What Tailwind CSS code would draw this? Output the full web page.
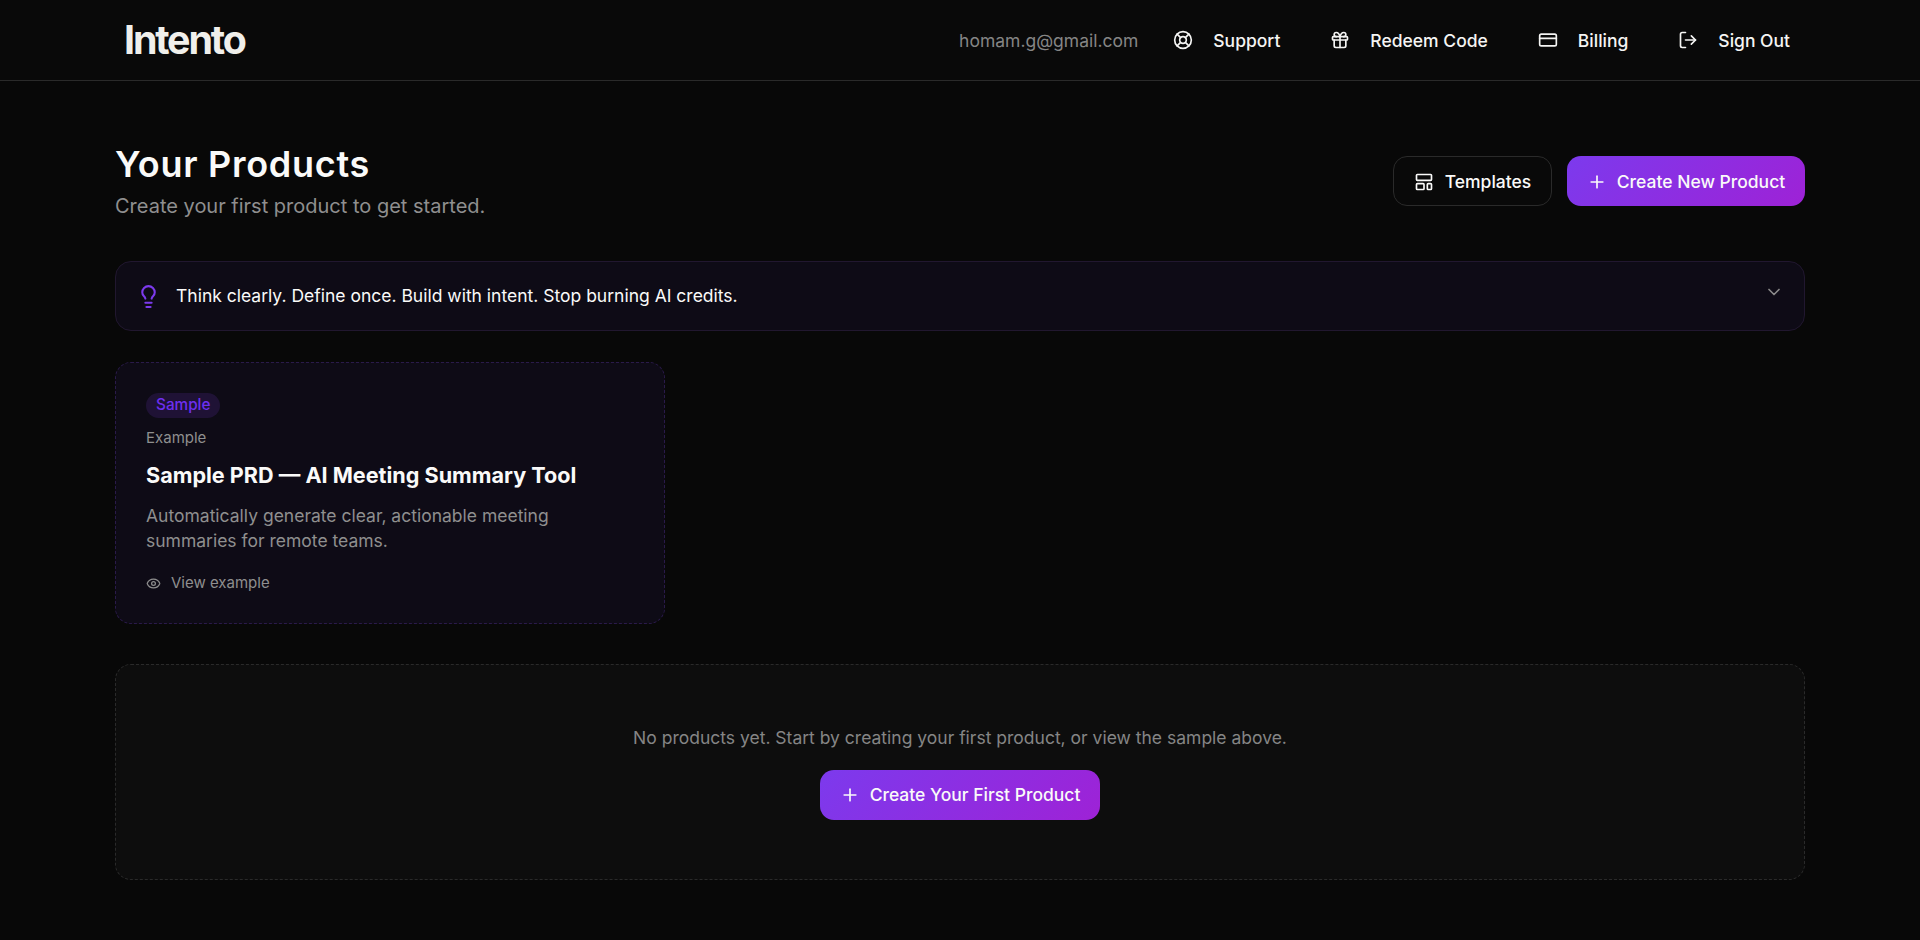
<!DOCTYPE html>
<html lang="en">
<head>
    <meta charset="UTF-8">
    <title>Intento - Your Products</title>
    <script src="https://cdn.jsdelivr.net/npm/@tailwindcss/browser@4"></script>
</head>
<body class="bg-[#080808] font-['Inter',sans-serif] text-white">
    <div class="min-h-[940px]">
        <!-- Top bar -->
        <header class="h-[81px] border-b border-[#2a2a2a] bg-[#090909] px-[115px] flex items-center justify-between">
            <span class="ml-[9px] text-[39.4px] leading-[40px] font-bold tracking-[-0.055em] text-[#f0efeb]">Intento</span>
            <nav class="-mr-px flex items-center gap-[18px] text-[17.5px] font-medium text-[#f5f5f4]">
                <span class="mr-px pt-[2px] font-normal text-[#858585]">homam.g@gmail.com</span>
                <a class="flex items-center gap-5 px-4 py-2">
                    <svg class="w-5 h-5" viewBox="0 0 24 24" fill="none" stroke="currentColor" stroke-width="2" stroke-linecap="round" stroke-linejoin="round"><circle cx="12" cy="12" r="10"/><path d="m4.93 4.93 4.24 4.24"/><path d="m14.83 9.17 4.24-4.24"/><path d="m14.83 14.83 4.24 4.24"/><path d="m9.17 14.83-4.24 4.24"/><circle cx="12" cy="12" r="4"/></svg>
                    <span class="pt-[2px]">Support</span>
                </a>
                <a class="flex items-center gap-5 px-4 py-2">
                    <svg class="w-5 h-5" viewBox="0 0 24 24" fill="none" stroke="currentColor" stroke-width="2" stroke-linecap="round" stroke-linejoin="round"><rect x="3" y="8" width="18" height="4" rx="1"/><path d="M12 8v13"/><path d="M19 12v7a2 2 0 0 1-2 2H7a2 2 0 0 1-2-2v-7"/><path d="M7.5 8a2.5 2.5 0 0 1 0-5A4.8 8 0 0 1 12 8a4.8 8 0 0 1 4.5-5 2.5 2.5 0 0 1 0 5"/></svg>
                    <span class="pt-[2px]">Redeem Code</span>
                </a>
                <a class="flex items-center gap-5 px-4 py-2">
                    <svg class="w-5 h-5" viewBox="0 0 24 24" fill="none" stroke="currentColor" stroke-width="2" stroke-linecap="round" stroke-linejoin="round"><rect x="2" y="5" width="20" height="14" rx="2"/><line x1="2" y1="10" x2="22" y2="10"/></svg>
                    <span class="pt-[2px]">Billing</span>
                </a>
                <a class="flex items-center gap-5 px-4 py-2">
                    <svg class="w-5 h-5" viewBox="0 0 24 24" fill="none" stroke="currentColor" stroke-width="2" stroke-linecap="round" stroke-linejoin="round"><path d="M9 21H5a2 2 0 0 1-2-2V5a2 2 0 0 1 2-2h4"/><polyline points="16 17 21 12 16 7"/><line x1="21" y1="12" x2="9" y2="12"/></svg>
                    <span class="pt-[2px]">Sign Out</span>
                </a>
            </nav>
        </header>

        <main class="px-[115px] pt-[63px]">
            <!-- Page heading -->
            <div class="flex items-center justify-between mb-[41px]">
                <div>
                    <h1 class="text-[36px] leading-[40px] font-semibold tracking-[0.02em] text-[#fafaf9]">Your Products</h1>
                    <p class="mt-2 text-[20px] leading-[28px] text-[#8f8f8f]">Create your first product to get started.</p>
                </div>
                <div class="flex items-center gap-[15px] mb-[2px]">
                    <button class="h-[50px] w-[159px] pt-px flex items-center justify-center gap-[11px] rounded-[14px] border border-[#2a2a2a] bg-[#090909] text-[17.5px] font-medium text-[#fafaf9]">
                        <svg class="w-5 h-5" viewBox="0 0 24 24" fill="none" stroke="currentColor" stroke-width="2" stroke-linecap="round" stroke-linejoin="round"><rect x="3" y="3" width="18" height="7" rx="1"/><rect x="3" y="14" width="9" height="7" rx="1"/><rect x="16" y="14" width="5" height="7" rx="1"/></svg>
                        <span class="pt-[2px]">Templates</span>
                    </button>
                    <button class="h-[50px] w-[238px] pt-px flex items-center justify-center gap-[10px] rounded-[14px] bg-linear-[135deg] from-[#7c3aed] to-[#9e22d6] text-[17.5px] font-medium text-[#fafaf9]">
                        <svg class="w-5 h-5" viewBox="0 0 24 24" fill="none" stroke="currentColor" stroke-width="2" stroke-linecap="round" stroke-linejoin="round"><path d="M5 12h14"/><path d="M12 5v14"/></svg>
                        <span class="pt-[2px]">Create New Product</span>
                    </button>
                </div>
            </div>

            <!-- Tip bar -->
            <div class="h-[70px] mb-[31px] pl-[20px] pr-[20px] flex items-center justify-between rounded-2xl border border-[#21172f] bg-[#0e0b16]">
                <div class="flex items-center gap-[15px]">
                    <svg class="w-[25px] h-[25px] text-[#7c3aed]" viewBox="0 0 24 24" fill="none" stroke="currentColor" stroke-width="2" stroke-linecap="round" stroke-linejoin="round"><path d="M15 14c.2-1 .7-1.7 1.5-2.5 1-.9 1.5-2.2 1.5-3.5A6 6 0 0 0 6 8c0 1 .2 2.2 1.5 3.5.7.7 1.3 1.5 1.5 2.5"/><path d="M9 18h6"/><path d="M10 22h4"/></svg>
                    <span class="text-[17.5px] font-normal text-[#fafaf9]">Think clearly. Define once. Build with intent. Stop burning AI credits.</span>
                </div>
                <svg class="w-5 h-5 mb-[8px] text-[#8a8a8a]" viewBox="0 0 24 24" fill="none" stroke="currentColor" stroke-width="2" stroke-linecap="round" stroke-linejoin="round"><path d="m6 9 6 6 6-6"/></svg>
            </div>

            <!-- Sample card -->
            <div class="w-[550px] h-[262px] mb-[40px] p-[30px] rounded-2xl border border-dashed border-[#2a1a4a] bg-[#0e0b16]">
                <span class="block w-fit h-[25px] px-[10px] rounded-full bg-[#1f1235] text-[15.3px] leading-[24px] font-medium text-[#6d2fef]">Sample</span>
                <p class="mt-[10px] text-[15px] leading-[20px] text-[#8f8f8f]">Example</p>
                <h3 class="mt-[13px] text-[21.6px] leading-[28px] font-bold text-[#fafaf9]">Sample PRD — AI Meeting Summary Tool</h3>
                <p class="mt-[15px] text-[17.5px] leading-[24.5px] text-[#8f8f8f]">Automatically generate clear, actionable meeting summaries for remote teams.</p>
                <div class="mt-[20px] flex items-center gap-[10px] text-[15px] leading-[20px] text-[#8f8f8f]">
                    <svg class="w-[15px] h-[15px]" viewBox="0 0 24 24" fill="none" stroke="currentColor" stroke-width="2" stroke-linecap="round" stroke-linejoin="round"><path d="M2.062 12.348a1 1 0 0 1 0-.696 10.75 10.75 0 0 1 19.876 0 1 1 0 0 1 0 .696 10.75 10.75 0 0 1-19.876 0"/><circle cx="12" cy="12" r="3"/></svg>
                    View example
                </div>
            </div>

            <!-- Empty state -->
            <div class="h-[216px] pt-[2px] flex flex-col items-center justify-center gap-[20px] rounded-2xl border border-dashed border-[#2a2a2a] bg-[#0d0d0d]">
                <p class="text-[17.5px] leading-[24px] text-[#858585]">No products yet. Start by creating your first product, or view the sample above.</p>
                <button class="h-[50px] w-[280px] flex items-center justify-center gap-[10px] rounded-[14px] bg-linear-[135deg] from-[#7c3aed] to-[#9e22d6] text-[17.5px] font-medium text-[#fafaf9]">
                    <svg class="w-5 h-5" viewBox="0 0 24 24" fill="none" stroke="currentColor" stroke-width="2" stroke-linecap="round" stroke-linejoin="round"><path d="M5 12h14"/><path d="M12 5v14"/></svg>
                    Create Your First Product
                </button>
            </div>
        </main>
    </div>
</body>
</html>
